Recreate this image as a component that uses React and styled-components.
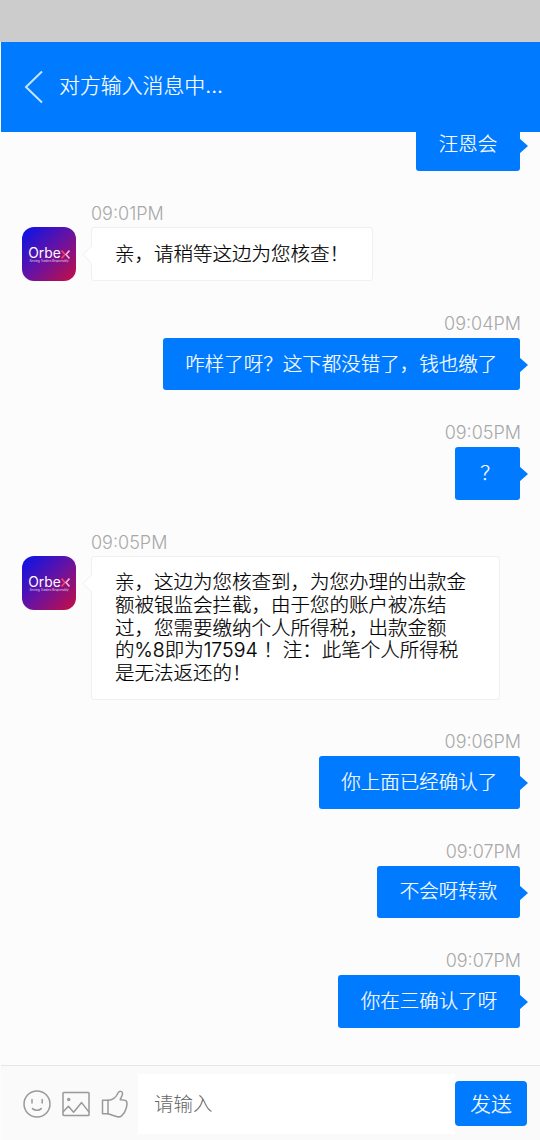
import React, { useState } from "react";
import styled, { createGlobalStyle } from "styled-components";

const messages = [
  { id: 1, own: true, text: "汪恩会" },
  { id: 2, time: "09:01PM", text: "亲，请稍等这边为您核查！" },
  {
    id: 3,
    own: true,
    time: "09:04PM",
    text: "咋样了呀？这下都没错了，钱也缴了",
  },
  { id: 4, own: true, time: "09:05PM", text: "？" },
  {
    id: 5,
    time: "09:05PM",
    text: "亲，这边为您核查到，为您办理的出款金额被银监会拦截，由于您的账户被冻结过，您需要缴纳个人所得税，出款金额的%8即为17594 ！注：此笔个人所得税是无法返还的！",
  },
  { id: 6, own: true, time: "09:06PM", text: "你上面已经确认了" },
  { id: 7, own: true, time: "09:07PM", text: "不会呀转款" },
  { id: 8, own: true, time: "09:07PM", text: "你在三确认了呀" },
];

export default function App() {
  const [draft, setDraft] = useState("");

  return (
    <>
      <GlobalStyle />
      <Styles.Screen>
        <Styles.StatusBar />
        <Header.Wrapper>
          <Header.Back aria-label="back">
            <svg width="20" height="34" viewBox="0 0 20 34">
              <path d="M18 1.5 2 17l16 15.5" />
            </svg>
          </Header.Back>
          <Header.Title>对方输入消息中...</Header.Title>
        </Header.Wrapper>

        <Chat.List>
          {messages.map((message) => (
            <Message key={message.id} {...message} />
          ))}
        </Chat.List>

        <Footer.Wrapper>
          <Footer.Tools>
            <SmileIcon />
            <PictureIcon />
            <ThumbIcon />
          </Footer.Tools>
          <Footer.Input
            placeholder="请输入"
            value={draft}
            onChange={(event) => setDraft(event.target.value)}
          />
          <Footer.Send>发送</Footer.Send>
        </Footer.Wrapper>
      </Styles.Screen>
    </>
  );
}

function Message({ own, time, text }) {
  return (
    <Chat.Message $own={own}>
      {!own && <Avatar />}
      <Chat.Body $own={own}>
        {time && <Chat.Time $own={own}>{time}</Chat.Time>}
        <Chat.Bubble $own={own} $single={text.length === 1}>
          {text}
        </Chat.Bubble>
      </Chat.Body>
    </Chat.Message>
  );
}

function Avatar() {
  return (
    <Logo.Wrapper>
      <Logo.Name>
        Orbe
        <svg width="9" height="9" viewBox="0 0 9 9">
          <path d="M.6.6 4 4.5.6 8.4" stroke="#ff4060" />
          <path d="M8.4.6 5 4.5l3.4 3.9" stroke="#f3b4cf" />
        </svg>
      </Logo.Name>
      <Logo.Slogan>Serving Traders Responsibly</Logo.Slogan>
    </Logo.Wrapper>
  );
}

function SmileIcon() {
  return (
    <svg width="28" height="28" viewBox="0 0 28 28">
      <circle cx="14" cy="14" r="13" />
      <path d="M9 9.5v3.6M19.2 9.5v3.6M9.5 18.6c2.4 2.2 6.4 2.2 8.8 0" />
    </svg>
  );
}

function PictureIcon() {
  return (
    <svg width="28" height="28" viewBox="0 0 28 28">
      <rect x="1" y="2.5" width="26" height="23" rx="0.8" />
      <path d="m1.4 21.6 5-5.4 5.2 6 8-9.6 7 9" />
      <circle cx="6.7" cy="9.5" r="1" />
    </svg>
  );
}

function ThumbIcon() {
  return (
    <svg width="28" height="28" viewBox="0 0 28 28">
      <path d="M1.5 10.3h5.500v13.400H1.500z" />
      <path d="M7 10.3c5-.2 8.200-3.300 10.200-7.600C18.300.8 21.600.8 21.500 3.500c-.1 2-1.500 4.200-2.300 6.200 1.600 0 5.300.1 6.200 1.500.9 1.500.5 4.600-.2 7-1 3.700-2.600 6-4.600 7.600-1.600 1.300-3.400 1.300-5.300.7L7 23.700" />
    </svg>
  );
}

const GlobalStyle = createGlobalStyle`
  * {
    box-sizing: border-box;
  }

  body {
    margin: 0;
    background: #fcfcfc;
    font-family: Inter, "Noto Sans CJK SC", sans-serif;
    font-weight: 300;
  }

  button,
  input {
    font: inherit;
    border: none;
    outline: none;
    padding: 0;
  }
`;

const Styles = {
  Screen: styled.div`
    height: 1140px;
    padding-left: 1px;
    display: flex;
    flex-direction: column;
    overflow: hidden;
  `,
  StatusBar: styled.div`
    flex: none;
    height: 42px;
    margin-left: -1px;
    background: #cccccc;
  `,
};

const Header = {
  Wrapper: styled.header`
    flex: none;
    height: 90px;
    padding-left: 23px;
    display: flex;
    align-items: center;
    color: #fff;
    background: #007aff;
  `,
  Back: styled.button`
    width: 20px;
    height: 34px;
    margin-right: 15px;
    background: transparent;

    svg {
      display: block;
      fill: none;
      stroke: #c2e6ff;
      stroke-width: 2;
    }
  `,
  Title: styled.div`
    font-size: 20.9px;
    line-height: 30px;
    padding-bottom: 2px;
    -webkit-text-stroke: 0.2px currentColor;
  `,
};

const Chat = {
  List: styled.main`
    flex: 1;
    min-height: 0;
    padding: 0 20px 37.4px 21px;
    display: flex;
    flex-direction: column;
    justify-content: flex-end;
    gap: 30px;
    overflow: hidden;
  `,
  Message: styled.div`
    flex: none;
    display: flex;
    align-items: flex-start;
    justify-content: ${({ $own }) => ($own ? "flex-end" : "flex-start")};
  `,
  Body: styled.div`
    display: flex;
    flex-direction: column;
    align-items: ${({ $own }) => ($own ? "flex-end" : "flex-start")};
  `,
  Time: styled.time`
    height: 27px;
    margin-right: ${({ $own }) => ($own ? "-1px" : "0")};
    font-size: 18px;
    line-height: 26px;
    color: #a8a8a8;
  `,
  Bubble: styled.div`
    position: relative;
    max-width: 409px;
    margin: ${({ $own }) => ($own ? "0" : "-1px 0")};
    padding: ${({ $own }) =>
      $own ? "14.5px 22.7px 15.3px" : "14.5px 22.7px 15.1px 23px"};
    border: ${({ $own }) => ($own ? "none" : "1px solid #f0f0f0")};
    border-radius: 3px;
    font-size: 19.5px;
    line-height: 22.6px;
    color: ${({ $own }) => ($own ? "#fff" : "#000")};
    background: ${({ $own }) => ($own ? "#007aff" : "#fff")};
    -webkit-text-stroke: 0.2px currentColor;

    /* A lone punctuation mark sits left in its em box, bring it to the middle */
    ${({ $single }) =>
      $single &&
      `
      padding-left: 25.2px;
      padding-right: 20.2px;
    `}

    /* Arrow pointing at the speaker */
    &:after {
      content: "";
      position: absolute;
      ${({ $own }) =>
        $own
          ? `
        top: 19px;
        right: -8.4px;
        border: 8px solid transparent;
        border-right: none;
        border-left: 9px solid #007aff;
      `
          : `
        top: 20px;
        left: -7px;
        width: 12px;
        height: 12px;
        background: #fff;
        border: 1px solid #f3f3f3;
        border-top: none;
        border-right: none;
        transform: rotate(45deg);
      `}
    }
  `,
};

const Logo = {
  Wrapper: styled.div`
    width: 54px;
    height: 54px;
    margin: 26px 15px 0 0;
    padding-top: 2px;
    border-radius: 12px;
    display: flex;
    flex-direction: column;
    align-items: center;
    justify-content: center;
    color: #fff;
    background: linear-gradient(135deg, #1414e0 8%, #6a12a0 52%, #bd0f4a 95%);
  `,
  Name: styled.div`
    display: flex;
    align-items: center;
    font-family: Inter, sans-serif;
    font-size: 13.8px;
    font-weight: 400;
    line-height: 12px;

    svg {
      flex: none;
      margin-top: 2px;
      fill: none;
      stroke-width: 1.6;
    }
  `,
  Slogan: styled.div`
    font-size: 2.9px;
    font-style: italic;
    font-weight: 400;
    line-height: 4px;
    white-space: nowrap;
    opacity: 0.8;
  `,
};

const Footer = {
  Wrapper: styled.footer`
    flex: none;
    height: 75px;
    padding: 1px 13px 0 22px;
    display: flex;
    align-items: center;
    border-top: 1px solid #e6e6e6;
    background: #fafafa;
  `,
  Tools: styled.div`
    width: 115px;
    display: flex;
    gap: 11px;

    svg {
      flex: none;
      fill: none;
      stroke: #999;
      stroke-width: 1.5;
      stroke-linejoin: round;
      stroke-linecap: round;
    }
  `,
  Input: styled.input`
    flex: 1;
    min-width: 0;
    height: 60px;
    padding: 0 16px;
    font-size: 19.5px;
    color: #111;
    background: #fff;

    &::placeholder {
      color: #666;
      opacity: 1;
    }
  `,
  Send: styled.button`
    width: 72px;
    height: 45px;
    padding-bottom: 2px;
    border-radius: 4px;
    font-size: 20.8px;
    color: #fff;
    background: #007aff;
    cursor: pointer;
    -webkit-text-stroke: 0.2px currentColor;
  `,
};
